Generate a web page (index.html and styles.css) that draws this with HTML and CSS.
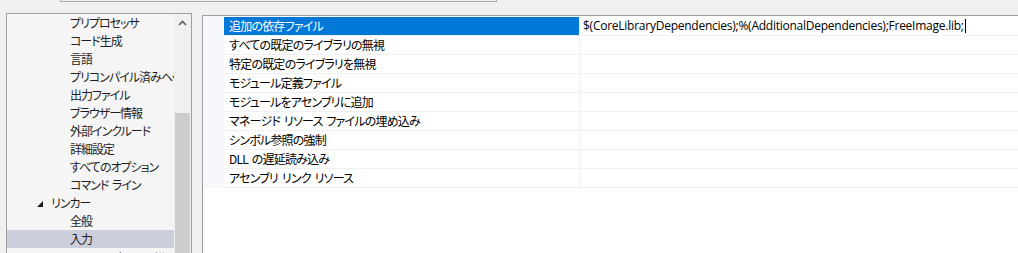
FILE: index.html
```html
<!DOCTYPE html>
<html lang="ja">
<head>
  <meta charset="UTF-8">
  <title>プロパティ ページ</title>
  <link rel="stylesheet" href="styles.css">
</head>
<body>
  <div class="top-box"></div>

  <div class="main">
    <div class="tree-panel">
      <ul class="tree">
        <li class="leaf">プリプロセッサ</li>
        <li class="leaf">コード生成</li>
        <li class="leaf">言語</li>
        <li class="leaf">プリコンパイル済みヘッダー</li>
        <li class="leaf">出力ファイル</li>
        <li class="leaf">ブラウザー情報</li>
        <li class="leaf">外部インクルード</li>
        <li class="leaf">詳細設定</li>
        <li class="leaf">すべてのオプション</li>
        <li class="leaf">コマンド ライン</li>
        <li class="group">
          <svg class="expander" width="6" height="6" viewBox="0 0 6 6"><polygon points="6,0 6,6 0,6" fill="#1e1e1e"/></svg>
          リンカー
        </li>
        <li class="leaf">全般</li>
        <li class="leaf selected">入力</li>
        <li class="leaf">マニフェスト ファイル</li>
      </ul>
      <div class="scrollbar">
        <div class="scroll-btn">
          <svg width="9" height="6" viewBox="0 0 9 6"><polyline points="1,5 4.5,1.5 8,5" fill="none" stroke="#606060" stroke-width="1.6"/></svg>
        </div>
        <div class="scroll-thumb"></div>
      </div>
    </div>

    <div class="grid-panel">
      <div class="gutter"></div>
      <div class="props">
        <div class="prop selected">
          <div class="prop-name">追加の依存ファイル</div>
          <div class="prop-value">$(CoreLibraryDependencies);%(AdditionalDependencies);FreeImage.lib;<span class="caret"></span></div>
        </div>
        <div class="prop">
          <div class="prop-name">すべての既定のライブラリの無視</div>
          <div class="prop-value"></div>
        </div>
        <div class="prop">
          <div class="prop-name">特定の既定のライブラリを無視</div>
          <div class="prop-value"></div>
        </div>
        <div class="prop">
          <div class="prop-name">モジュール定義ファイル</div>
          <div class="prop-value"></div>
        </div>
        <div class="prop">
          <div class="prop-name">モジュールをアセンブリに追加</div>
          <div class="prop-value"></div>
        </div>
        <div class="prop">
          <div class="prop-name">マネージド リソース ファイルの埋め込み</div>
          <div class="prop-value"></div>
        </div>
        <div class="prop">
          <div class="prop-name">シンボル参照の強制</div>
          <div class="prop-value"></div>
        </div>
        <div class="prop">
          <div class="prop-name">DLL の遅延読み込み</div>
          <div class="prop-value"></div>
        </div>
        <div class="prop">
          <div class="prop-name">アセンブリ リンク リソース</div>
          <div class="prop-value"></div>
        </div>
      </div>
    </div>
  </div>
</body>
</html>
```

FILE: styles.css
```css
body {
  margin: 0;
  height: 253px;
  overflow: hidden;
  background: #f0f0f0;
  font-family: 'Noto Sans CJK JP', 'Noto Sans', sans-serif;
  font-feature-settings: "palt";
  font-size: 12px;
  color: #1e1e1e;
}
.top-box {
  margin-left: 60px;
  width: 435px;
  height: 1px;
  border: 1px solid #adadad;
  border-top: none;
}
.main {
  display: flex;
  align-items: flex-start;
}
.tree-panel {
  margin: 11px 0 0 6px;
  width: 184px;
  height: 260px;
  border: 1px solid #a0a0a0;
  display: flex;
  background: #f5f5f5;
}
.tree {
  flex: 1;
  list-style: none;
  margin: 0;
  padding: 0;
  overflow: hidden;
  letter-spacing: -1px;
  word-spacing: 2px;
}
.tree li {
  height: 18px;
  line-height: 18px;
  white-space: nowrap;
  overflow: hidden;
}
.tree .leaf {
  padding-left: 63px;
}
.tree .group {
  padding-left: 30px;
  display: flex;
  align-items: center;
}
.tree .expander {
  margin-right: 8px;
  margin-top: 1px;
}
.tree .selected {
  background: #cccedb;
}
.scrollbar {
  width: 17px;
  background: #f0f0f0;
  display: flex;
  flex-direction: column;
  align-items: center;
}
.scroll-btn {
  height: 17px;
  width: 17px;
  display: flex;
  align-items: center;
  justify-content: center;
}
.scroll-thumb {
  margin-top: 82px;
  width: 15px;
  flex: 1;
  background: #cdcdcd;
}
.grid-panel {
  flex: 1;
  margin: 13px 0 0 10px;
  height: 260px;
  border-top: 1px solid #a0a0a0;
  border-left: 1px solid #a0a0a0;
  background: #fff;
  display: flex;
  align-items: flex-start;
}
.gutter {
  width: 21px;
  height: 172px;
  background: #f6f8fc;
}
.props {
  flex: 1;
  border-bottom: 1px solid #eef0f4;
}
.prop {
  display: flex;
  height: 18px;
  line-height: 18px;
  border-top: 1px solid #eef0f4;
  color: #000;
}
.prop:first-child {
  border-top-color: #fff;
}
.prop-name {
  width: 350px;
  padding-left: 5px;
  border-right: 1px solid #eef0f4;
  white-space: nowrap;
  letter-spacing: -0.8px;
  word-spacing: 2px;
}
.prop-value {
  flex: 1;
  padding-left: 3px;
  white-space: nowrap;
  font-family: 'Open Sans', sans-serif;
  letter-spacing: -0.25px;
}
.prop.selected .prop-name {
  background: #0078d7;
  color: #fff;
}
.caret {
  display: inline-block;
  width: 1px;
  height: 14px;
  background: #000;
  vertical-align: -3px;
  margin-left: 1px;
}
```
